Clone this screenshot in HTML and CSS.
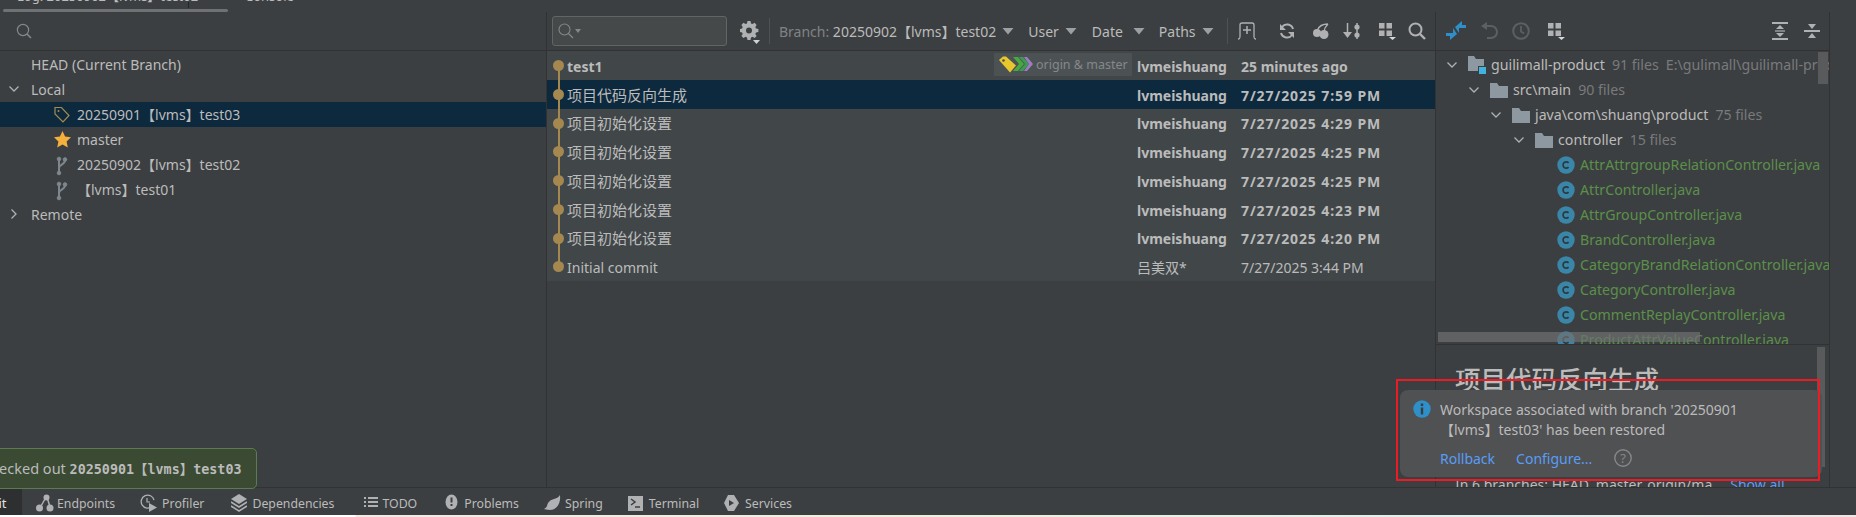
FILE: index.html
```html
<!DOCTYPE html>
<html lang="en">
<head>
<meta charset="utf-8">
<title>Git log</title>
<link rel="stylesheet" href="styles.css">
</head>
<body>
<svg class="defs" width="0" height="0">
  <symbol id="i-branch" viewBox="0 0 16 20"><g fill="#7d878d" stroke="#7d878d"><path d="M5 3v14M5 12c0-4 6-3 6-8" fill="none" stroke-width="2"/><circle cx="5" cy="3" r="1.8"/><circle cx="5" cy="17" r="1.8"/><circle cx="11" cy="3.5" r="1.8"/></g></symbol>
  <symbol id="i-folder" viewBox="0 0 18 16"><path d="M0 1h7l2 3h9v12H0z" fill="#8d98a0"/></symbol>
  <symbol id="i-class" viewBox="0 0 18 18"><circle cx="9" cy="9" r="8.7" fill="#3a86a8"/><path d="M11.6 6.8A3.2 3.2 0 1 0 11.6 11.2" fill="none" stroke="#2c3a40" stroke-width="1.7"/></symbol>
  <symbol id="i-down" viewBox="0 0 12 14"><path d="M.5 4h11L6 10.500z" fill="#9da0a2"/></symbol>
  <symbol id="i-group" viewBox="0 0 18 18"><path d="M1 1h5.500v5.500H1zM8.500 1H14v5.500H8.500zM1 8.500h5.500V14H1zM8.500 8.500H14V14H8.500z" fill="#afb1b3"/><path d="M11 15h7l-3.500 3z" fill="#d5d7d9"/></symbol>
  <symbol id="i-chev-d" viewBox="0 0 12 12"><path d="M1.500 3.500L6 8l4.500-4.500" fill="none" stroke="#aeb0b2" stroke-width="1.300"/></symbol>
</svg>

<div class="top">
  <div class="tabs"><span class="tab-log">Log: 20250902【lvms】test02</span><span class="tab-con">Console</span></div>
  <div class="tab-div"></div>
  <div class="tab-scroll"></div>
</div>

<div class="main">
  <section class="branches">
    <div class="bar bar-left">
      <svg class="search-ico" width="16" height="16" viewBox="0 0 16 16"><circle cx="7" cy="7" r="5.600" fill="none" stroke="#85888a" stroke-width="1.200"/><path d="M11 11l4 4" stroke="#85888a" stroke-width="1.600"/></svg>
    </div>
    <ul class="btree">
      <li class="brow">HEAD (Current Branch)</li>
      <li class="brow"><svg class="bchev" width="12" height="12"><use href="#i-chev-d"/></svg>Local</li>
      <li class="brow sub sel">
        <svg class="bico" width="16" height="17" viewBox="0 0 16 17"><path d="M1 1.500h6.500l7.500 8-6 6.500-8-8z" fill="none" stroke="#a68a52" stroke-width="1.200"/><circle cx="4.500" cy="5" r="1" fill="#a68a52"/></svg>20250901【lvms】test03</li>
      <li class="brow sub">
        <svg class="bico" width="17" height="17" viewBox="0 0 17 17"><path d="M8.500 0l2.600 5.600 5.900.7-4.400 4.100 1.200 6L8.500 13.400 3.200 16.400l1.200-6L0 6.300l5.900-.7z" fill="#f4af3d"/></svg>master</li>
      <li class="brow sub"><svg class="bico" width="16" height="20"><use href="#i-branch"/></svg>20250902【lvms】test02</li>
      <li class="brow sub"><svg class="bico" width="16" height="20"><use href="#i-branch"/></svg>【lvms】test01</li>
      <li class="brow"><svg class="bchev right" width="12" height="12"><use href="#i-chev-d"/></svg>Remote</li>
    </ul>
  </section>

  <section class="log">
    <div class="bar bar-log">
      <div class="filter-box">
        <svg width="16" height="16" viewBox="0 0 16 16"><circle cx="6.500" cy="6.500" r="5.500" fill="none" stroke="#85888a" stroke-width="1.100"/><path d="M10.500 10.500l4.500 4.500" stroke="#85888a" stroke-width="1.300"/></svg>
        <svg class="mini" width="6" height="4" viewBox="0 0 6 4"><path d="M0 0h6L3 4z" fill="#85888a"/></svg>
      </div>
      <svg class="gear" width="20" height="24" viewBox="0 0 20 24"><path fill="#afb1b3" fill-rule="evenodd" d="M7.500 1h3l.5 2.400 1.500.7 2.100-1.300 2 2.100-1.300 2 .7 1.600 2.400.5v3l-2.400.5-.7 1.600 1.300 2-2 2-2.100-1.300-1.500.7-.5 2.400h-3L7 17.500l-1.500-.7-2 1.300-2.100-2 1.300-2-.6-1.600L0 12V9l2.100-.5.6-1.600-1.300-2 2.100-2.100 2 1.300L7 3.400zM9 7.500a3 3 0 1 0 0 6 3 3 0 0 0 0-6z"/><path d="M13 20h7l-3.500 4z" fill="#cfd1d3"/></svg>
      <span class="vsep sep-a"></span>
      <span class="filter"><span class="dim">Branch:</span> 20250902【lvms】test02</span><svg class="tri tri-b" width="12" height="14"><use href="#i-down"/></svg>
      <span class="filter f-user">User</span><svg class="tri tri-u" width="12" height="14"><use href="#i-down"/></svg>
      <span class="filter f-date">Date</span><svg class="tri tri-d" width="12" height="14"><use href="#i-down"/></svg>
      <span class="filter f-paths">Paths</span><svg class="tri tri-p" width="12" height="14"><use href="#i-down"/></svg>
      <span class="vsep sep-b"></span>
      <svg class="tool t-add" width="20" height="18" viewBox="0 0 20 18"><path d="M1 17c2 0 2-1 2-3V3q0-2 2-2h10q2 0 2 2v11c0 2 0 3 2 3" fill="none" stroke="#afb1b3" stroke-width="1.300"/><path d="M10 4v8M6 8h8" stroke="#afb1b3" stroke-width="1.500"/></svg>
      <svg class="tool t-ref" width="16" height="16" viewBox="0 0 16 16"><path d="M14 6A6.200 6.200 0 0 0 3 4M2 10a6.200 6.200 0 0 0 11 2" fill="none" stroke="#afb1b3" stroke-width="2"/><path d="M1 1v6h6zM15 15V9H9z" fill="#afb1b3"/></svg>
      <svg class="tool t-che" width="16" height="16" viewBox="0 0 16 16"><circle cx="4" cy="10" r="4" fill="#afb1b3"/><circle cx="11" cy="11.500" r="4.500" fill="#afb1b3"/><path d="M15 1C10 1 6 3 4.500 7M15 1c-2 2-3.500 4-4 7" fill="none" stroke="#afb1b3" stroke-width="1.300"/></svg>
      <svg class="tool t-sort" width="18" height="16" viewBox="0 0 18 16"><path d="M4.500 0v10M14 0v16" stroke="#afb1b3" stroke-width="1.500"/><path d="M0 9h9l-4.500 6z" fill="#afb1b3"/><circle cx="14" cy="4" r="2.600" fill="#afb1b3"/><circle cx="14" cy="12" r="2.600" fill="#afb1b3"/></svg>
      <svg class="tool t-grp" width="18" height="18"><use href="#i-group"/></svg>
      <svg class="tool t-find" width="18" height="18" viewBox="0 0 18 18"><circle cx="7.500" cy="7.500" r="6" fill="none" stroke="#afb1b3" stroke-width="2"/><path d="M12 12l5 5" stroke="#afb1b3" stroke-width="2.400"/></svg>
    </div>
    <div class="commits">
      <div class="commit first bold"><span class="subject">test1</span>
        <span class="refs"><svg width="34" height="18" viewBox="0 0 34 18"><path d="M25 2h3l6 7-6 7h-3l5-7z" fill="#a07cc0"/><path d="M20 2h4l6 7-6 7h-4l6-7z" fill="#3f9a5a"/><path d="M14 2h5l6 7-6 7h-5l6-7z" fill="#49a83f"/><path d="M0 5l4-3.500h3l10 9-6 7z" fill="#e8c62e"/><circle cx="4.500" cy="5.500" r="1.300" fill="#4a5052"/></svg><span>origin &amp; master</span></span>
        <span class="author">lvmeishuang</span><span class="date">25 minutes ago</span></div>
      <div class="commit sel bold"><span class="subject normal">项目代码反向生成</span><span class="author">lvmeishuang</span><span class="date wide">7/27/2025 7:59 PM</span></div>
      <div class="commit bold"><span class="subject normal">项目初始化设置</span><span class="author">lvmeishuang</span><span class="date wide">7/27/2025 4:29 PM</span></div>
      <div class="commit bold"><span class="subject normal">项目初始化设置</span><span class="author">lvmeishuang</span><span class="date wide">7/27/2025 4:25 PM</span></div>
      <div class="commit bold"><span class="subject normal">项目初始化设置</span><span class="author">lvmeishuang</span><span class="date wide">7/27/2025 4:25 PM</span></div>
      <div class="commit bold"><span class="subject normal">项目初始化设置</span><span class="author">lvmeishuang</span><span class="date wide">7/27/2025 4:23 PM</span></div>
      <div class="commit bold"><span class="subject normal">项目初始化设置</span><span class="author">lvmeishuang</span><span class="date wide">7/27/2025 4:20 PM</span></div>
      <div class="commit last"><span class="subject">Initial commit</span><span class="author">吕美双*</span><span class="date">7/27/2025 3:44 PM</span></div>
    </div>
  </section>

  <section class="changes">
    <div class="bar bar-right">
      <svg class="r-blue" width="20" height="20" viewBox="0 0 20 20"><path d="M0 12h7V7l4 6-7 6v-4H0z" fill="#2f8fc9"/><path d="M20 7h-7v5L9 6l7-6v4h4z" fill="#2f8fc9"/></svg>
      <svg class="r-undo" width="17" height="18" viewBox="0 0 17 18"><path d="M5 4h5a6 6 0 0 1 0 12H6" fill="none" stroke="#5d5f61" stroke-width="2"/><path d="M6 0v8L0 4z" fill="#5d5f61"/></svg>
      <svg class="r-clock" width="18" height="18" viewBox="0 0 18 18"><circle cx="9" cy="9" r="7.800" fill="none" stroke="#5d5f61" stroke-width="2"/><path d="M9 4v5.500l3 2" fill="none" stroke="#5d5f61" stroke-width="1.800"/></svg>
      <svg class="r-grp" width="18" height="18"><use href="#i-group"/></svg>
      <svg class="r-exp" width="16" height="18" viewBox="0 0 16 18"><path d="M0 1h16M0 17h16" stroke="#afb1b3" stroke-width="2"/><path d="M8 3l4 4H4zM8 15l-4-4h8z" fill="#afb1b3"/><path d="M3 9h10" stroke="#afb1b3" stroke-width="1.200"/></svg>
      <svg class="r-col" width="16" height="18" viewBox="0 0 16 18"><path d="M0 9h16" stroke="#afb1b3" stroke-width="2"/><path d="M8 7L4 2h8zM8 11l4 5H4z" fill="#afb1b3"/></svg>
    </div>
    <div class="tree">
      <div class="trow l0"><svg class="tchev" width="12" height="12"><use href="#i-chev-d"/></svg>
        <svg class="tico" width="18" height="18" viewBox="0 0 18 18"><path d="M0 0h6l2 3h8v7h-6v5H0z" fill="#8d98a0"/><path d="M11 11h7v7h-7z" fill="#3fb4e0"/></svg>
        <span>guilimall-product</span><span class="muted">91 files</span><span class="muted">E:\gulimall\guilimall-product</span></div>
      <div class="trow l1"><svg class="tchev" width="12" height="12"><use href="#i-chev-d"/></svg><svg class="tico" width="18" height="16"><use href="#i-folder"/></svg><span>src\main</span><span class="muted">90 files</span></div>
      <div class="trow l2"><svg class="tchev" width="12" height="12"><use href="#i-chev-d"/></svg><svg class="tico" width="18" height="16"><use href="#i-folder"/></svg><span>java\com\shuang\product</span><span class="muted">75 files</span></div>
      <div class="trow l3"><svg class="tchev" width="12" height="12"><use href="#i-chev-d"/></svg><svg class="tico" width="18" height="16"><use href="#i-folder"/></svg><span>controller</span><span class="muted">15 files</span></div>
      <div class="trow file"><svg class="tico" width="18" height="18"><use href="#i-class"/></svg><span>AttrAttrgroupRelationController.java</span></div>
      <div class="trow file"><svg class="tico" width="18" height="18"><use href="#i-class"/></svg><span>AttrController.java</span></div>
      <div class="trow file"><svg class="tico" width="18" height="18"><use href="#i-class"/></svg><span>AttrGroupController.java</span></div>
      <div class="trow file"><svg class="tico" width="18" height="18"><use href="#i-class"/></svg><span>BrandController.java</span></div>
      <div class="trow file"><svg class="tico" width="18" height="18"><use href="#i-class"/></svg><span>CategoryBrandRelationController.java</span></div>
      <div class="trow file"><svg class="tico" width="18" height="18"><use href="#i-class"/></svg><span>CategoryController.java</span></div>
      <div class="trow file"><svg class="tico" width="18" height="18"><use href="#i-class"/></svg><span>CommentReplayController.java</span></div>
      <div class="trow file"><svg class="tico" width="18" height="18"><use href="#i-class"/></svg><span>ProductAttrValueController.java</span></div>
      <div class="vbar"></div>
      <div class="hbar"></div>
    </div>
    <div class="details">
      <h2 class="d-title">项目代码反向生成</h2>
      <p class="d-branches">In 6 branches: HEAD, master, origin/ma<a class="d-show">Show all</a></p>
      <div class="d-scroll"></div>
    </div>
  </section>
  <aside class="stripe"></aside>
</div>

<footer class="bottom">
  <span class="btab git">Git</span>
  <span class="btab b-end"><svg width="18" height="18" viewBox="0 0 18 18"><path d="M4 14L10 3M11 3l3 10" stroke="#afb1b3" stroke-width="1.500"/><circle cx="10.500" cy="3.500" r="3" fill="#afb1b3"/><circle cx="3.500" cy="14" r="3.500" fill="#afb1b3"/><circle cx="14" cy="14" r="3.500" fill="#afb1b3"/></svg>Endpoints</span>
  <span class="btab b-pro"><svg width="17" height="18" viewBox="0 0 17 18"><path d="M12 12.500A6.500 6.500 0 1 1 14 6" fill="none" stroke="#afb1b3" stroke-width="1.300"/><path d="M7 4v4h3" fill="none" stroke="#afb1b3" stroke-width="1.200"/><path d="M9 9l8 4.500L9 18z" fill="#afb1b3"/></svg>Profiler</span>
  <span class="btab b-dep"><svg width="16" height="18" viewBox="0 0 16 18"><path d="M8 0l8 5-8 5-8-5z" fill="#afb1b3"/><path d="M0 8l8 5 8-5M0 12l8 5 8-5" fill="none" stroke="#afb1b3" stroke-width="1.500"/></svg>Dependencies</span>
  <span class="btab b-tod"><svg width="14" height="14" viewBox="0 0 14 14"><path d="M0 2h2M4 2h10M0 6h2M4 6h10M0 10h2M4 10h10" stroke="#afb1b3" stroke-width="2"/></svg>TODO</span>
  <span class="btab b-prb"><svg width="13" height="18" viewBox="0 0 13 18"><ellipse cx="6.500" cy="8" rx="6" ry="7.500" fill="#afb1b3"/><path d="M6.500 3.500v5M6.500 10v2" stroke="#3c3f41" stroke-width="2"/></svg>Problems</span>
  <span class="btab b-spr"><svg width="17" height="17" viewBox="0 0 17 17"><path d="M16 0c1 8-3 15-10 15-3 0-5-1-6-1 1-1 2-1 3-3 1-4 3-6 7-7 3-1 5-2 6-4z" fill="#afb1b3"/></svg>Spring</span>
  <span class="btab b-ter"><svg width="15" height="15" viewBox="0 0 15 15"><path d="M0 0h15v15H0z" fill="#afb1b3"/><path d="M3 3l4 3-4 3M7 11h5" fill="none" stroke="#3c3f41" stroke-width="1.500"/></svg>Terminal</span>
  <span class="btab b-srv"><svg width="15" height="16" viewBox="0 0 15 16"><path d="M4 0h6l5 8-5 8H4L0 8z" fill="#afb1b3"/><path d="M5 5l5 3-5 3z" fill="#3c3f41"/></svg>Services</span>
</footer>
<div class="wallpaper"></div>

<div class="toast"><span>Checked out </span><b class="mono">20250901【lvms】test03</b></div>

<div class="notify">
  <svg class="n-info" width="18" height="18" viewBox="0 0 18 18"><circle cx="9" cy="9" r="8.700" fill="#2f8fc9"/><path d="M9 3.500v2.500M9 7.500v7" stroke="#3a3d3f" stroke-width="2.400"/></svg>
  <div class="n-body">
    <p class="n-text">Workspace associated with branch '20250901<br>【lvms】test03' has been restored</p>
    <div class="n-links"><a>Rollback</a><a>Configure...</a>
      <svg width="18" height="18" viewBox="0 0 18 18"><circle cx="9" cy="9" r="8.200" fill="none" stroke="#85888a" stroke-width="1.400"/><text x="9" y="13.500" text-anchor="middle" class="n-q">?</text></svg>
    </div>
  </div>
</div>
<div class="redbox"></div>
</body>
</html>
```

FILE: styles.css
```css
* { box-sizing: border-box; }
html, body { margin: 0; padding: 0; }
body {
  width: 1856px; height: 517px; overflow: hidden; position: relative;
  background: #3c3f41; color: #bbbbbb;
  font: 14px/25px "Noto Sans", "Noto Sans CJK SC", sans-serif;
  display: flex; flex-direction: column;
}
.defs { position: absolute; }
ul, p, h2 { margin: 0; padding: 0; list-style: none; }

.top { height: 12px; flex: none; position: relative; overflow: hidden; }
.tabs { display: flex; margin-top: -12px; height: 16px; line-height: 16px; font-size: 13px; white-space: nowrap; }
.tab-log { margin-left: 17px; width: 228px; }
.tab-con { color: #bbbbbb; }
.tab-div { position: absolute; left: 188px; top: 2px; width: 1px; height: 6px; background: #232425; }
.tab-scroll { position: absolute; left: 3px; top: 9px; width: 225px; height: 3px; background: #6f7173; border-radius: 2px; }

.main { height: 475px; flex: none; display: flex; }
.bar { height: 39px; border-bottom: 1px solid #323232; display: flex; align-items: center; flex: none; }

.branches { width: 547px; flex: none; border-right: 1px solid #323232; }
.bar-left { padding-left: 16px; }
.btree { padding-top: 1px; }
.brow { height: 25px; padding-left: 31px; display: flex; align-items: center; position: relative; white-space: pre; }
.brow.sub { padding-left: 77px; }
.brow.sel { background: #0d293e; }
.bchev { position: absolute; left: 8px; top: 6px; }
.bchev.right { transform: rotate(-90deg); }
.bico { position: absolute; left: 54px; top: 4px; }

.log { width: 889px; flex: none; border-right: 1px solid #323232; display: flex; flex-direction: column; }
.bar-log { padding-left: 5px; white-space: nowrap; }
.filter-box { width: 175px; height: 30px; background: #45494a; border: 1px solid #646464; border-radius: 3px; display: flex; align-items: center; padding-left: 5px; gap: 1px; }
.mini { margin-top: -1px; }
.gear { margin: 2px 0 0 13px; flex: none; }
.vsep { width: 1px; height: 26px; background: #4e5254; flex: none; }
.sep-a { margin: 0 9px; }
.sep-b { margin-left: 13px; }
.filter { color: #bbbbbb; }
.dim { color: #808386; }
.tri { flex: none; }
.tri-b { margin-left: 6px; }
.tri-u { margin-left: 6px; }
.tri-d { margin-left: 10px; }
.tri-p { margin-left: 6px; }
.f-user { margin-left: 14px; }
.f-date { margin-left: 15px; }
.f-paths { margin-left: 14px; }
.tool { flex: none; }
.t-add { margin-left: 9px; }
.t-ref { margin-left: 22px; }
.t-che { margin-left: 18px; }
.t-sort { margin-left: 14px; }
.t-grp { margin-left: 17px; }
.t-find { margin-left: 12px; }

.commits { display: flex; flex-direction: column; background: #414749; }
.commit { height: 28.75px; display: flex; align-items: center; padding: 2px 0 0 20px; position: relative; white-space: nowrap; }
.commit::before { content: ""; position: absolute; left: 6px; top: 9px; width: 11px; height: 11px; border-radius: 50%; background: #a5884f; }
.commit::after { content: ""; position: absolute; left: 10.500px; top: 0; bottom: 0; width: 2px; background: #a5884f; }
.commit.first::after { top: 14px; }
.commit.last::after { bottom: 14px; }
.commit.bold { font-weight: 700; }
.commit.sel { background: #0d293e; }
.subject { flex: 1; min-width: 0; }
.subject.normal { font-weight: 400; font-size: 15px; }
.refs { display: flex; align-items: center; height: 23px; width: 138px; margin: -4px 5px 0 0; padding-left: 5px; gap: 3px; background: #4c5254; color: #85888a; font-weight: 400; font-size: 12.500px; }
.author { width: 104px; flex: none; }
.date { width: 194px; flex: none; }
.date.wide { letter-spacing: .9px; }

.changes { width: 394px; flex: none; border-right: 1px solid #323232; display: flex; flex-direction: column; }
.r-blue { margin-left: 10px; }
.r-undo { margin-left: 15px; }
.r-clock { margin-left: 14px; }
.r-grp { margin-left: 17px; }
.r-exp { margin-left: 207px; }
.r-col { margin-left: 16px; }

.tree { height: 293px; position: relative; overflow: hidden; padding-top: 1px; font-size: 14.200px; }
.trow { height: 25px; display: flex; align-items: center; white-space: nowrap; }
.trow span + span { margin-left: 7px; }
.muted { color: #787a7c; }
.tchev { margin-right: 10px; flex: none; }
.tico { margin-right: 5px; flex: none; }
.l0 { padding-left: 10px; }
.l1 { padding-left: 32px; }
.l2 { padding-left: 54px; }
.l3 { padding-left: 77px; }
.file { padding-left: 121px; color: #5b8f4a; }
.vbar { position: absolute; left: 382px; top: 1px; width: 10px; height: 32px; background: #585a5c; }
.hbar { position: absolute; left: 2px; top: 281px; width: 262px; height: 10px; background: rgba(110,112,114,.7); }

.details { height: 143px; border-top: 1px solid #323232; position: relative; overflow: hidden; padding-left: 19px; }
.d-title { font-family: "Noto Sans CJK SC", sans-serif; font-size: 25.500px; font-weight: 500; line-height: 30px; margin-top: 18px; color: #bbbbbb; }
.d-branches { margin-top: 79px; white-space: nowrap; }
.d-show { color: #589df6; margin-left: 18px; }
.d-scroll { position: absolute; left: 381px; top: 2px; width: 8px; height: 120px; background: #585a5c; }

.stripe { flex: 1; }

.bottom { height: 28px; flex: none; border-top: 1px solid #323232; display: flex; align-items: center; font-size: 12.300px; overflow: hidden; white-space: nowrap; }
.btab { display: flex; align-items: center; gap: 5px; height: 100%; padding-top: 3px; }
.git { width: 22px; background: #2d2f31; color: #e0e0e0; text-indent: -11px; font-size: 13px; }
.b-end { margin-left: 14px; gap: 3px; }
.b-pro { margin-left: 25px; }
.b-dep { margin-left: 27px; }
.b-tod { margin-left: 30px; gap: 4px; }
.b-prb { margin-left: 28px; gap: 6px; }
.b-spr { margin-left: 25px; gap: 4px; }
.b-ter { margin-left: 25px; gap: 6px; }
.b-srv { margin-left: 25px; gap: 6px; }

.wallpaper { height: 2px; flex: none; background: linear-gradient(90deg, #ffffff 355px, #f6e8e4 356px, #eef0dc 900px, #dff0ee 1500px, #f2e4e4 1856px); }

.toast { position: absolute; left: -70px; top: 448px; width: 327px; height: 41px; padding-left: 50px; background: #3a4a33; border: 1px solid #5e7a52; border-radius: 5px; line-height: 39px; font-size: 14.500px; white-space: pre; }
.mono { font-family: "DejaVu Sans Mono", "Noto Sans CJK SC", monospace; font-weight: 700; font-size: 13.400px; }

.notify { position: absolute; left: 1400px; top: 390px; width: 422px; height: 87px; background: #505153; border-radius: 8px; display: flex; padding: 10px 0 0 13px; }
.n-info { flex: none; margin-right: 9px; }
.n-text { line-height: 20px; white-space: nowrap; }
.n-links { display: flex; align-items: center; margin-top: 7px; height: 22px; color: #589df6; }
.n-links a + a { margin-left: 21px; }
.n-links svg { margin-left: 22px; }
.n-q { font-size: 13px; fill: #85888a; }
.redbox { position: absolute; left: 1396px; top: 379px; width: 424px; height: 102px; border: 2.500px solid #ed1c24; }
```
